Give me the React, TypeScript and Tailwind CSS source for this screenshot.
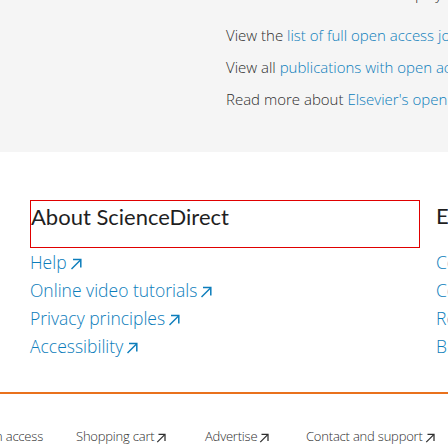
import React from 'react'

function ExtArrow({ className = '' }: { className?: string }) {
  return (
    <svg viewBox="0 0 12 12" className={className} fill="none" stroke="currentColor" strokeWidth="1.5">
      <path d="M1.5 11 L10.5 2" />
      <path d="M3 1.5 H10.8 V9.5" />
    </svg>
  )
}

const aboutLinks = ['Help', 'Online video tutorials', 'Privacy principles', 'Accessibility']
const otherLinks = ['Contact and support', 'Cookie settings', 'Remote access', 'Browse']

export default function App() {
  return (
    <div className="h-[448px] w-[448px] overflow-hidden bg-white font-['Open_Sans',sans-serif] font-light">
      <div className="h-[152px] overflow-hidden whitespace-nowrap bg-[#f5f5f5] pl-[226px] text-[15px] leading-[20px] text-[#2e2e2e]">
        <p className="-mt-[16px]">line with the user license displayed on the article.</p>
        <p className="mt-[21px]">
          View the <span className="text-[#0c7dbb]">list of full open access journals</span>
        </p>
        <p className="mt-[12px]">
          View all <span className="text-[#0c7dbb]">publications with open access articles</span>
        </p>
        <p className="mt-[12px]">
          Read more about <span className="text-[#0c7dbb]">Elsevier's open access</span>
        </p>
      </div>

      <div className="mt-[48px] flex gap-4 whitespace-nowrap pl-[30px]">
        <div className="w-[390px] shrink-0">
          <div className="h-[48px] border border-[#e00000] pt-[2px] font-['Lato',sans-serif] text-[22px] font-normal leading-[28px] text-[#1f1f1f]">
            About ScienceDirect
          </div>
          <ul className="text-[17.5px] leading-[28px] text-[#0c7dbb]">
            {aboutLinks.map((l) => (
              <li key={l} className="flex items-center">
                {l}
                <ExtArrow className="ml-[3px] mt-[3px] h-[12px] w-[12px]" />
              </li>
            ))}
          </ul>
        </div>
        <div className="shrink-0">
          <div className="h-[48px] pt-[2px] font-['Lato',sans-serif] text-[22px] font-normal leading-[28px] text-[#1f1f1f]">
            Elsevier
          </div>
          <ul className="text-[17.5px] leading-[28px] text-[#0c7dbb]">
            {otherLinks.map((l) => (
              <li key={l}>{l}</li>
            ))}
          </ul>
        </div>
      </div>

      <div className="mt-[32px] h-[2px] bg-[#e9711c]" />

      <div className="mt-[32px] flex items-center whitespace-nowrap text-[13px] leading-[20px] tracking-[-0.2px] text-[#2e2e2e]">
        <div className="flex w-[43px] shrink-0 justify-end">
          <span>Open access</span>
        </div>
        <span className="ml-[33px] flex w-[129px] shrink-0 items-center">
          Shopping cart
          <ExtArrow className="ml-[2px] mt-[3px] h-[10px] w-[10px]" />
        </span>
        <span className="flex w-[101px] shrink-0 items-center">
          Advertise
          <ExtArrow className="ml-[2px] mt-[3px] h-[10px] w-[10px]" />
        </span>
        <span className="flex shrink-0 items-center">
          Contact and support
          <ExtArrow className="ml-[2px] mt-[3px] h-[10px] w-[10px]" />
        </span>
      </div>
    </div>
  )
}
